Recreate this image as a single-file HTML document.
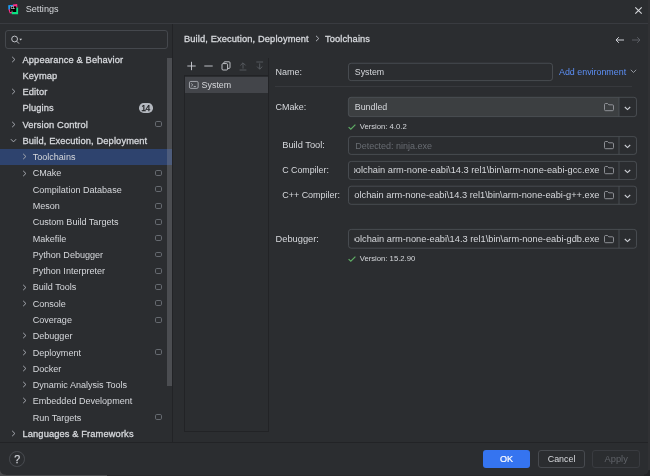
<!DOCTYPE html>
<html>
<head>
<meta charset="utf-8">
<title>Settings</title>
<style>
*{box-sizing:border-box;margin:0;padding:0}
html,body{width:650px;height:476px;overflow:hidden;background:#2b2d30;font-family:"Liberation Sans",sans-serif;color:#d6d8dc;font-size:9.3px}
.abs{position:absolute}
#root{position:relative;width:650px;height:476px;background:#2b2d30;overflow:hidden;will-change:transform}
#title{left:0;top:0;width:650px;height:24px;background:#2b2d30;border-bottom:1px solid #393b40}
#title .t{left:25.7px;top:3.3px;font-size:9.1px;color:#d6d8dc;line-height:12px}
#split{left:172.2px;top:24px;width:1px;height:418px;background:#222326}
#search{left:5px;top:29.8px;width:162.6px;height:18.8px;border:1px solid #45484d;border-radius:3px;background:#2b2d30}
.row{position:absolute;left:0;width:172.2px;height:16.28px;line-height:16.28px;font-size:9.05px;white-space:nowrap;color:#d6d8dc}
.row.b{font-size:9.3px;-webkit-text-stroke:0.3px #d6d8dc;letter-spacing:0.12px}
.row.sel{background:#2e436e}
.row .lbl{position:absolute;top:0.5px}
.l0 .lbl{left:22.5px}
.l1 .lbl{left:32.7px}
.chev{position:absolute;top:4.6px;width:7px;height:7px}
.chev path{stroke:#a8abb2;stroke-width:1;fill:none}
.l0 .chev{left:9.5px}
.l1 .chev{left:20.5px}
.mod{position:absolute;left:155.3px;top:5.2px;width:6.6px;height:5.9px;border:0.8px solid #666a70;border-top-width:1.9px;border-radius:1.8px}
.mod i{display:none}
.badge{position:absolute;left:139.2px;top:3.4px;width:13.4px;height:9.5px;border-radius:4.75px;background:#b4b8bf;color:#17181a;font-size:8.6px;line-height:11.1px;text-align:center;font-weight:normal;letter-spacing:-0.5px;text-indent:-0.5px;-webkit-text-stroke:0.25px #17181a}
#scroll{left:166.9px;top:57.8px;width:5.2px;height:327.9px;background:rgba(150,152,158,0.3)}
#bottom{left:0;top:441.8px;width:650px;height:1px;background:#222326}
.btn{position:absolute;top:450.1px;height:17.6px;border-radius:3px;font-size:9.3px;line-height:18.4px;text-align:center}
#ok{left:483.2px;width:46.8px;background:#3574f0;color:#fff;font-size:9px;-webkit-text-stroke:0.2px #fff}
#cancel{left:538px;width:47.2px;border:1px solid #474a4f;color:#d6d8dc;line-height:16.4px;font-size:8.9px}
#apply{left:592.4px;width:47.6px;border:1px solid #393b40;color:#5f6268;line-height:17px}
#help{left:9.3px;top:451.3px;width:15.7px;height:15.7px;border:1px solid #484b50;border-radius:50%;color:#ced0d6;font-size:10.6px;line-height:14.2px;text-align:center;-webkit-text-stroke:0.25px #ced0d6}
.bc{top:32.5px;font-size:9.3px;-webkit-text-stroke:0.3px #d6d8dc;letter-spacing:0.12px;line-height:12px;color:#d6d8dc;white-space:nowrap}
#list{left:184px;top:75.4px;width:85px;height:356.4px;border:1px solid #222326;background:#2b2d30}
#tbline{left:268px;top:58px;width:1px;height:18px;background:#222326}
#listsel{left:185px;top:77.2px;width:83px;height:15.8px;background:#43454a}
.lab{font-size:9.3px;line-height:12px;color:#d6d8dc;white-space:nowrap}
.field{position:absolute;left:348.5px;font-size:9.3px;color:#d6d8dc;white-space:nowrap;overflow:hidden}
.field .tx{position:absolute;left:6.3px;top:0;bottom:0;display:flex;align-items:center}
.combo{width:288.3px}
.combo .sep{display:none}
.combo .clip{position:absolute;left:5.5px;top:0;bottom:0;width:245.5px;overflow:hidden}
.combo .clip span{position:absolute;right:0;top:0;bottom:0;display:flex;align-items:center;font-size:9.27px}
.small{font-size:7.7px;line-height:10px;color:#d6d8dc;white-space:nowrap}
svg{position:absolute;overflow:visible}
.ic path,.ic rect{stroke:#ced0d6;stroke-width:0.85;fill:none}
.fld rect,.fld path{stroke:#52555b;stroke-width:0.75;fill:none}
.tm path,.tm rect{stroke:#b4b7bd}
.fo path{stroke:#9ea1a7;stroke-width:0.85;fill:none}
.cv path{stroke:#cfd1d7;stroke-width:1.1;fill:none}
.chk path{stroke:#5fad65;stroke-width:1.2;fill:none}
</style>
</head>
<body>
<div id="root">
  <div id="title" class="abs">
    <svg style="left:7.7px;top:3.8px" width="10.2" height="10.55" viewBox="0 0 10.8 11.2">
      <path d="M0.2 1.4 L6.2 0.9 L5.6 2.8 L2.5 2.8 L2.5 5.9 L0.4 6.1 Z" fill="#1e9df2"/>
      <path d="M5.4 0.5 L9.7 0 L10 3.6 L8.6 3.9 L8.6 2.6 L5 2.6 Z" fill="#fe2d88"/>
      <path d="M0.5 5.9 L2.5 5.7 L2.5 8.4 L4.3 8.4 L4 10.1 L1.8 9.7 Z" fill="#fe2d88"/>
      <path d="M8.6 3.9 L10.7 3.8 L10.7 11 L3.9 11 L4.1 8.4 L8.6 8.4 Z" fill="#0ce283"/>
      <rect x="2.4" y="2.6" width="6.3" height="5.9" fill="#000"/>
      <text x="2.9" y="5.6" font-size="3.2" font-weight="bold" fill="#fff" font-family="Liberation Sans, sans-serif">CL</text>
      <rect x="3.3" y="7.3" width="2" height="0.45" fill="#fff"/>
    </svg>
    <div class="abs t">Settings</div>
    <svg style="left:635px;top:6.8px" width="7" height="7" viewBox="0 0 7 7"><path d="M0.3 0.3 L6.7 6.7 M6.7 0.3 L0.3 6.7" stroke="#d6d8dc" stroke-width="1.1" fill="none"/></svg>
  </div>

  <div id="split" class="abs"></div>
  <div id="search" class="abs">
    <svg style="left:5.2px;top:4.2px" width="14" height="10" viewBox="0 0 14 10"><circle cx="3.6" cy="4" r="2.9" stroke="#ced0d6" stroke-width="0.9" fill="none"/><path d="M5.7 6.2 L8 8.6" stroke="#ced0d6" stroke-width="0.9"/><path d="M8.3 3.8 L11.1 3.8 L9.7 5.5 Z" fill="#d6d8dc"/></svg>
  </div>

  <div id="tree">
<div class="row l0 b" style="top:51.00px"><svg class="chev" viewBox="0 0 7 7"><path d="M2.2 0.9 L4.9 3.5 L2.2 6.1"/></svg><span class="lbl">Appearance &amp; Behavior</span></div>
<div class="row l0 b" style="top:67.28px"><span class="lbl">Keymap</span></div>
<div class="row l0 b" style="top:83.56px"><svg class="chev" viewBox="0 0 7 7"><path d="M2.2 0.9 L4.9 3.5 L2.2 6.1"/></svg><span class="lbl">Editor</span></div>
<div class="row l0 b" style="top:99.84px"><span class="lbl">Plugins</span><span class="badge">14</span></div>
<div class="row l0 b" style="top:116.12px"><svg class="chev" viewBox="0 0 7 7"><path d="M2.2 0.9 L4.9 3.5 L2.2 6.1"/></svg><span class="lbl">Version Control</span><span class="mod"><i></i></span></div>
<div class="row l0 b" style="top:132.40px"><svg class="chev" viewBox="0 0 7 7"><path d="M0.9 2.2 L3.5 4.9 L6.1 2.2"/></svg><span class="lbl">Build, Execution, Deployment</span></div>
<div class="row l1 sel" style="top:148.68px"><svg class="chev" viewBox="0 0 7 7"><path d="M2.2 0.9 L4.9 3.5 L2.2 6.1"/></svg><span class="lbl">Toolchains</span></div>
<div class="row l1" style="top:164.96px"><svg class="chev" viewBox="0 0 7 7"><path d="M2.2 0.9 L4.9 3.5 L2.2 6.1"/></svg><span class="lbl">CMake</span><span class="mod"><i></i></span></div>
<div class="row l1" style="top:181.24px"><span class="lbl">Compilation Database</span><span class="mod"><i></i></span></div>
<div class="row l1" style="top:197.52px"><span class="lbl">Meson</span><span class="mod"><i></i></span></div>
<div class="row l1" style="top:213.80px"><span class="lbl">Custom Build Targets</span><span class="mod"><i></i></span></div>
<div class="row l1" style="top:230.08px"><span class="lbl">Makefile</span><span class="mod"><i></i></span></div>
<div class="row l1" style="top:246.36px"><span class="lbl">Python Debugger</span><span class="mod"><i></i></span></div>
<div class="row l1" style="top:262.64px"><span class="lbl">Python Interpreter</span><span class="mod"><i></i></span></div>
<div class="row l1" style="top:278.92px"><svg class="chev" viewBox="0 0 7 7"><path d="M2.2 0.9 L4.9 3.5 L2.2 6.1"/></svg><span class="lbl">Build Tools</span><span class="mod"><i></i></span></div>
<div class="row l1" style="top:295.20px"><svg class="chev" viewBox="0 0 7 7"><path d="M2.2 0.9 L4.9 3.5 L2.2 6.1"/></svg><span class="lbl">Console</span><span class="mod"><i></i></span></div>
<div class="row l1" style="top:311.48px"><span class="lbl">Coverage</span><span class="mod"><i></i></span></div>
<div class="row l1" style="top:327.76px"><svg class="chev" viewBox="0 0 7 7"><path d="M2.2 0.9 L4.9 3.5 L2.2 6.1"/></svg><span class="lbl">Debugger</span></div>
<div class="row l1" style="top:344.04px"><svg class="chev" viewBox="0 0 7 7"><path d="M2.2 0.9 L4.9 3.5 L2.2 6.1"/></svg><span class="lbl">Deployment</span><span class="mod"><i></i></span></div>
<div class="row l1" style="top:360.32px"><svg class="chev" viewBox="0 0 7 7"><path d="M2.2 0.9 L4.9 3.5 L2.2 6.1"/></svg><span class="lbl">Docker</span></div>
<div class="row l1" style="top:376.60px"><svg class="chev" viewBox="0 0 7 7"><path d="M2.2 0.9 L4.9 3.5 L2.2 6.1"/></svg><span class="lbl">Dynamic Analysis Tools</span></div>
<div class="row l1" style="top:392.88px"><svg class="chev" viewBox="0 0 7 7"><path d="M2.2 0.9 L4.9 3.5 L2.2 6.1"/></svg><span class="lbl">Embedded Development</span></div>
<div class="row l1" style="top:409.16px"><span class="lbl">Run Targets</span><span class="mod"><i></i></span></div>
<div class="row l0 b" style="top:425.44px"><svg class="chev" viewBox="0 0 7 7"><path d="M2.2 0.9 L4.9 3.5 L2.2 6.1"/></svg><span class="lbl">Languages &amp; Frameworks</span></div>
  </div>
  <div id="scroll" class="abs"></div>

  <!-- breadcrumb -->
  <div class="abs bc" style="left:184px">Build, Execution, Deployment</div>
  <svg style="left:314.5px;top:35.4px" width="5" height="7" viewBox="0 0 5 7"><path d="M1 0.8 L3.8 3.5 L1 6.2" stroke="#b0b3ba" stroke-width="1" fill="none"/></svg>
  <div class="abs bc" style="left:325px">Toolchains</div>
  <svg class="ic" style="left:614.6px;top:36px" width="10" height="8" viewBox="0 0 10 8"><path d="M9 4 H1 M3.8 1.2 L1 4 L3.8 6.8" style="stroke-width:1"/></svg>
  <svg style="left:631.3px;top:36px" width="10" height="8" viewBox="0 0 10 8"><path d="M1 4 H9 M6.2 1.2 L9 4 L6.2 6.8" stroke="#5a5d63" stroke-width="1" fill="none"/></svg>

  <!-- toolbar -->
  <svg style="left:187px;top:61px" width="80" height="10" viewBox="0 0 80 10">
    <path d="M4.5 0.8 V9.2 M0.3 5 H8.7" stroke="#ced0d6" stroke-width="0.9" fill="none"/>
    <path d="M17.3 5 H25.7" stroke="#ced0d6" stroke-width="0.9" fill="none"/>
    <rect x="35" y="2.6" width="5.6" height="6.4" rx="1.1" stroke="#ced0d6" stroke-width="0.9" fill="none"/>
    <path d="M36.8 2.6 V1.8 Q36.8 0.8 37.8 0.8 H42 Q43 0.8 43 1.8 V6.4 Q43 7.4 42 7.4 H40.6" stroke="#ced0d6" stroke-width="0.9" fill="none"/>
    <path d="M56 7.6 V2 M53.4 4.4 L56 1.8 L58.6 4.4 M52.6 9 H59.4" stroke="#5a5d63" stroke-width="0.9" fill="none"/>
    <path d="M72.7 2.4 V8 M70.1 5.6 L72.7 8.2 L75.3 5.6 M69.3 1 H76.1" stroke="#5a5d63" stroke-width="0.9" fill="none"/>
  </svg>
  <div id="tbline" class="abs"></div>

  <div id="list" class="abs"></div>
  <div id="listsel" class="abs"></div>
  <svg class="ic tm" style="left:189.4px;top:81.1px" width="9.6" height="7.8" viewBox="0 0 9.6 7.8"><rect x="0.45" y="0.45" width="8.7" height="6.9" rx="1.3"/><path d="M2.2 2.5 L3.8 3.9 L2.2 5.3 M4.7 5.5 H6.9"/></svg>
  <div class="abs lab" style="left:201.6px;top:79.4px;font-size:8.9px">System</div>

  <!-- form -->
<svg class="fld" style="left:0;top:0" width="650" height="476" viewBox="0 0 650 476">
<rect x="348.50" y="63.25" width="204.00" height="17.35" rx="2.6"/>
<path d="M351.00 97.30 H619 V116.60 H351.00 Q348.40 116.60 348.40 114.00 V99.90 Q348.40 97.30 351.00 97.30 Z" style="fill:#3c3f41;stroke:none"/>
<rect x="348.40" y="97.30" width="288.10" height="19.30" rx="2.6"/>
<path d="M619 97.30 V116.60"/>
<rect x="348.50" y="136.60" width="288.00" height="17.80" rx="2.6"/>
<path d="M619 136.60 V154.40"/>
<rect x="348.50" y="161.40" width="288.00" height="18.10" rx="2.6"/>
<path d="M619 161.40 V179.50"/>
<rect x="348.50" y="186.20" width="288.00" height="18.10" rx="2.6"/>
<path d="M619 186.20 V204.30"/>
<rect x="348.50" y="229.40" width="288.00" height="18.80" rx="2.6"/>
<path d="M619 229.40 V248.20"/>
</svg>
  <div class="abs lab" style="left:275.5px;top:65.8px;font-size:9px">Name:</div>
  <div class="field" style="top:62.9px;width:204.5px;height:18px"><span class="tx" style="font-size:8.8px">System</span></div>
  <div class="abs lab" style="left:559px;top:65.8px;color:#5c8ff5;font-size:8.9px">Add environment</div>
  <svg style="left:630px;top:69.3px" width="7" height="5" viewBox="0 0 7 5"><path d="M0.8 0.8 L3.5 3.5 L6.2 0.8" stroke="#9da0a8" stroke-width="0.9" fill="none"/></svg>

  <div class="abs" style="left:275.2px;top:86px;width:357.3px;height:1px;background:#37393d"></div>

  <div class="abs lab" style="left:275.5px;top:100.8px;font-size:8.95px">CMake:</div>
  <div class="field combo" style="top:96.95px;height:20px"><span class="tx" style="font-size:8.85px">Bundled</span><div class="sep"></div></div>

  <svg class="chk" style="left:347.6px;top:124px" width="8" height="6" viewBox="0 0 8 6"><path d="M0.6 3.1 L2.8 5.2 L7.4 0.6"/></svg>
  <div class="abs small" style="left:359.7px;top:122px">Version: 4.0.2</div>

  <div class="abs lab" style="left:282.2px;top:139.3px">Build Tool:</div>
  <div class="field combo" style="top:136.25px;height:18.5px"><span class="tx" style="color:#686c72;font-size:8.97px;left:6.7px">Detected: ninja.exe</span><div class="sep"></div></div>

  <div class="abs lab" style="left:282.2px;top:164px;font-size:8.85px">C Compiler:</div>
  <div class="field combo" style="top:161.05px;height:18.8px"><div class="clip"><span>toolchain arm-none-eabi\14.3 rel1\bin\arm-none-eabi-gcc.exe</span></div><div class="sep"></div></div>

  <div class="abs lab" style="left:282.2px;top:189px;font-size:8.97px">C++ Compiler:</div>
  <div class="field combo" style="top:185.85px;height:18.8px"><div class="clip"><span>toolchain arm-none-eabi\14.3 rel1\bin\arm-none-eabi-g++.exe</span></div><div class="sep"></div></div>

  <div class="abs lab" style="left:275.5px;top:232.7px">Debugger:</div>
  <div class="field combo" style="top:229.05px;height:19.5px"><div class="clip"><span>toolchain arm-none-eabi\14.3 rel1\bin\arm-none-eabi-gdb.exe</span></div><div class="sep"></div></div>

  <svg class="chk" style="left:347.6px;top:256px" width="8" height="6" viewBox="0 0 8 6"><path d="M0.6 3.1 L2.8 5.2 L7.4 0.6"/></svg>
  <div class="abs small" style="left:359.7px;top:254px">Version: 15.2.90</div>

  <div id="icons">
<svg class="fo" style="left:604px;top:102.85px" width="10" height="8.2" viewBox="0 0 10 8.2"><path d="M0.5 1.6 Q0.5 0.5 1.6 0.5 H3.5 L4.8 1.8 H8.4 Q9.5 1.8 9.5 2.9 V6.6 Q9.5 7.7 8.4 7.7 H1.6 Q0.5 7.7 0.5 6.6 Z"/></svg>
<svg class="cv" style="left:624.2px;top:105.65px" width="7" height="5" viewBox="0 0 7 5"><path d="M0.8 1 L3.5 3.6 L6.2 1"/></svg>
<svg class="fo" style="left:604px;top:141.40px" width="10" height="8.2" viewBox="0 0 10 8.2"><path d="M0.5 1.6 Q0.5 0.5 1.6 0.5 H3.5 L4.8 1.8 H8.4 Q9.5 1.8 9.5 2.9 V6.6 Q9.5 7.7 8.4 7.7 H1.6 Q0.5 7.7 0.5 6.6 Z"/></svg>
<svg class="cv" style="left:624.2px;top:144.20px" width="7" height="5" viewBox="0 0 7 5"><path d="M0.8 1 L3.5 3.6 L6.2 1"/></svg>
<svg class="fo" style="left:604px;top:166.35px" width="10" height="8.2" viewBox="0 0 10 8.2"><path d="M0.5 1.6 Q0.5 0.5 1.6 0.5 H3.5 L4.8 1.8 H8.4 Q9.5 1.8 9.5 2.9 V6.6 Q9.5 7.7 8.4 7.7 H1.6 Q0.5 7.7 0.5 6.6 Z"/></svg>
<svg class="cv" style="left:624.2px;top:169.15px" width="7" height="5" viewBox="0 0 7 5"><path d="M0.8 1 L3.5 3.6 L6.2 1"/></svg>
<svg class="fo" style="left:604px;top:191.15px" width="10" height="8.2" viewBox="0 0 10 8.2"><path d="M0.5 1.6 Q0.5 0.5 1.6 0.5 H3.5 L4.8 1.8 H8.4 Q9.5 1.8 9.5 2.9 V6.6 Q9.5 7.7 8.4 7.7 H1.6 Q0.5 7.7 0.5 6.6 Z"/></svg>
<svg class="cv" style="left:624.2px;top:193.95px" width="7" height="5" viewBox="0 0 7 5"><path d="M0.8 1 L3.5 3.6 L6.2 1"/></svg>
<svg class="fo" style="left:604px;top:234.70px" width="10" height="8.2" viewBox="0 0 10 8.2"><path d="M0.5 1.6 Q0.5 0.5 1.6 0.5 H3.5 L4.8 1.8 H8.4 Q9.5 1.8 9.5 2.9 V6.6 Q9.5 7.7 8.4 7.7 H1.6 Q0.5 7.7 0.5 6.6 Z"/></svg>
<svg class="cv" style="left:624.2px;top:237.50px" width="7" height="5" viewBox="0 0 7 5"><path d="M0.8 1 L3.5 3.6 L6.2 1"/></svg>
  </div>

  <div id="bottom" class="abs"></div>
  <div id="help" class="abs">?</div>
  <div id="ok" class="btn">OK</div>
  <div id="cancel" class="btn">Cancel</div>
  <div id="apply" class="btn">Apply</div>

  <!-- window edges -->
  <div class="abs" style="left:648px;top:0;width:2px;height:476px;background:#303134"></div>
  <div class="abs" style="left:0;top:474.8px;width:650px;height:2px;background:#29292b"></div>
  <div class="abs" style="left:0;top:474.8px;width:107px;height:2px;background:#4a4b4d"></div>
  <svg style="left:0;top:470px" width="6" height="6" viewBox="0 0 6 6"><path d="M0 0 V6 H6 V4.8 Q0.6 4.8 0 0 Z" fill="#4a4b4d"/></svg>
  <svg style="left:644px;top:470px" width="6" height="6" viewBox="0 0 6 6"><path d="M6 0 V6 H0 V4.6 Q4.2 4.6 4.4 0 Z" fill="#222326"/></svg>
</div>
</body>
</html>
